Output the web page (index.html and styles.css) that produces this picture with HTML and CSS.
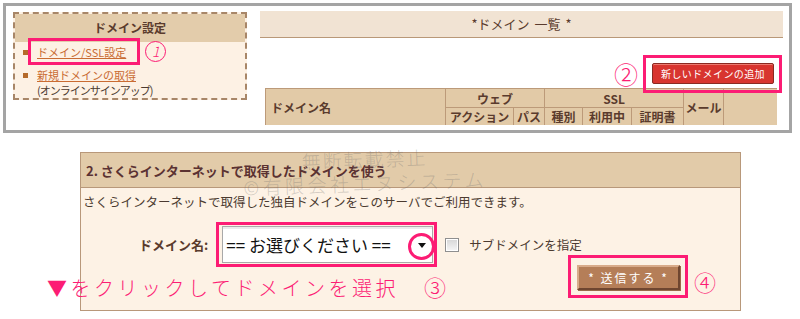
FILE: index.html
```html
<!DOCTYPE html>
<html lang="ja">
<head>
    <meta charset="UTF-8">
    <meta name="viewport" content="width=device-width, initial-scale=1.0">
    <title>ドメイン設定</title>
    <link rel="stylesheet" href="styles.css">
</head>
<body>

<div class="shot">

    <section class="admin">
        <div class="menu">
            <div class="menu-head">ドメイン設定</div>
            <ul class="menu-list">
                <li>
                    <span class="dot"></span>
                    <a class="link mark mark-1" href="#">ドメイン/SSL設定</a>
                    <span class="num-drawn">1</span>
                </li>
                <li>
                    <span class="dot"></span>
                    <div>
                        <a class="link" href="#">新規ドメインの取得</a><br>
                        <span class="sub">(オンラインサインアップ)</span>
                    </div>
                </li>
            </ul>
        </div>

        <div class="list">
            <div class="list-title">*ドメイン 一覧 *</div>
            <div class="add-row">
                <span class="num">②</span>
                <button class="btn-add mark mark-2" type="button">新しいドメインの追加</button>
            </div>
            <div class="table-clip">
                <table class="domains">
                    <colgroup>
                        <col style="width:180px">
                        <col style="width:68px">
                        <col style="width:31px">
                        <col style="width:38px">
                        <col style="width:49px">
                        <col style="width:52px">
                        <col style="width:40px">
                        <col style="width:54px">
                    </colgroup>
                    <tr class="row-1">
                        <th rowspan="2" class="left">ドメイン名</th>
                        <th colspan="2">ウェブ</th>
                        <th colspan="3">SSL</th>
                        <th rowspan="2">メール</th>
                        <th rowspan="2"></th>
                    </tr>
                    <tr class="row-2">
                        <th>アクション</th>
                        <th>パス</th>
                        <th>種別</th>
                        <th>利用中</th>
                        <th>証明書</th>
                    </tr>
                </table>
            </div>
        </div>
    </section>

    <section class="form">
        <h2 class="form-head">2. さくらインターネットで取得したドメインを使う</h2>
        <div class="form-body">
            <p class="lead">さくらインターネットで取得した独自ドメインをこのサーバでご利用できます。</p>
            <div class="field-row">
                <label class="field-label">ドメイン名:</label>
                <div class="select mark mark-3">
                    <span class="select-text">== お選びください ==</span>
                    <span class="select-arrow"></span>
                    <span class="ring"></span>
                </div>
                <span class="check"></span>
                <span class="check-label">サブドメインを指定</span>
            </div>
            <div class="submit-row">
                <button class="btn-send mark mark-4" type="button">* 送信する *</button>
                <span class="num num-4">④</span>
            </div>
        </div>
    </section>

    <!-- annotations drawn over the screenshot -->
    <p class="hint">▼をクリックしてドメインを選択<span class="num num-3">③</span></p>

    <div class="watermark">
        <span class="wm-1">無断転載禁止</span>
        <span class="wm-2">©有限会社エヌシステム</span>
    </div>

</div>

</body>
</html>
```

FILE: styles.css
```css
* {
    box-sizing: border-box;
}

body {
    margin: 0;
    background-color: #fff;
    font-family: "Noto Sans CJK JP", "Liberation Sans", sans-serif;
    color: #4b3a30;
}

.shot {
    position: relative;
    width: 800px;
    height: 319px;
    overflow: hidden;
}

/* pink annotation frames */
.mark {
    position: relative;
}

.mark::after {
    content: "";
    position: absolute;
    border: 3px solid #fc1c74;
    pointer-events: none;
}

.num {
    color: #fc1c74;
    font-size: 24px;
    line-height: 1;
    font-weight: 300;
}

/* top panel */
.admin {
    display: flex;
    align-items: flex-start;
    gap: 13px;
    width: 789px;
    height: 130px;
    margin: 3px 0 0 3px;
    padding: 5px 0 0 7px;
    border: 3px solid #a4a4a4;
}

.menu {
    flex: none;
    width: 234px;
    height: 88px;
    margin-top: 1px;
    border: 2px dashed #a88668;
    background-color: #fdf1e4;
}

.menu-head {
    height: 28px;
    line-height: 28px;
    background-color: #e3ccab;
    text-align: center;
    font-size: 12px;
    font-weight: bold;
    color: #5a3b2d;
}

.menu-list {
    list-style: none;
    margin: 0;
    padding: 3px 0 0 8px;
    font-size: 11px;
    line-height: 15px;
}

.menu-list li {
    display: flex;
    align-items: flex-start;
}

.menu-list li + li {
    margin-top: 6px;
}

.dot {
    flex: none;
    width: 5px;
    height: 5px;
    margin: 5px 9px 0 0;
    background-color: #b56a2a;
}

.link {
    color: #c96b32;
    text-decoration: underline;
}

.sub {
    color: #4b3a30;
    letter-spacing: -1px;
}

.mark-1::after {
    top: -7px;
    left: -9px;
    right: -14px;
    bottom: -5px;
}

.num-drawn {
    flex: none;
    width: 21px;
    height: 21px;
    margin: -4px 0 0 19px;
    border: 1.5px solid #fc1c74;
    border-radius: 50%;
    color: #fc1c74;
    font-size: 14px;
    font-style: italic;
    font-weight: 300;
    line-height: 18px;
    text-align: center;
}

.list {
    flex: none;
    width: 523px;
}

.list-title {
    height: 27px;
    line-height: 26px;
    background-color: #f1e3d3;
    border-bottom: 1px solid #b99878;
    text-align: center;
    font-size: 13px;
    color: #5a3b2d;
    word-spacing: 2px;
}

.add-row {
    display: flex;
    justify-content: flex-end;
    align-items: center;
    gap: 14px;
    height: 21px;
    margin-top: 25px;
    padding-right: 9px;
}

.btn-add {
    width: 122px;
    height: 21px;
    padding: 0;
    border: 1px solid #8a2a22;
    border-radius: 2px;
    background-color: #d8352f;
    box-shadow: inset 0 1px 0 #ec7b70;
    color: #fff;
    font-family: inherit;
    font-size: 10px;
    letter-spacing: 0.4px;
}

.mark-2::after {
    top: -9px;
    left: -10px;
    right: -9px;
    bottom: -10px;
}

.table-clip {
    height: 37px;
    margin: 4px 6px 0 5px;
    overflow: hidden;
}

.domains {
    width: 512px;
    border-collapse: collapse;
    table-layout: fixed;
}

.domains th {
    padding: 0;
    border: 1px solid #bc9a79;
    background-color: #e2caa7;
    color: #5a3b2d;
    font-size: 12px;
    font-weight: bold;
    text-align: center;
}

.domains .left {
    text-align: left;
    padding-left: 5px;
}

.row-1 th {
    height: 19px;
}

.row-2 th {
    height: 18px;
}

/* bottom panel */
.form {
    width: 661px;
    height: 159px;
    margin: 19px 0 0 80px;
    border: 1px solid #b8987a;
    background-color: #fdf2e5;
}

.form-head {
    margin: 0;
    height: 35px;
    line-height: 35px;
    padding-left: 5px;
    background-color: #e2cba9;
    border-bottom: 1px solid #b8987a;
    font-size: 13px;
    font-weight: bold;
    color: #5b3232;
}

.form-body {
    padding: 5px 0 0 2px;
}

.lead {
    margin: 0;
    font-size: 12.5px;
    line-height: 17px;
}

.field-row {
    display: flex;
    align-items: center;
    margin-top: 16px;
    padding-left: 56px;
}

.field-label {
    margin-right: 14px;
    font-size: 13px;
    font-weight: bold;
    color: #5a3b2d;
}

.select {
    display: flex;
    align-items: center;
    width: 211px;
    height: 37px;
    padding-left: 3px;
    border: 1px solid #a9a9a9;
    background-color: #fff;
    box-shadow: inset 0 2px 0 #ececec;
    color: #111;
    font-size: 17px;
}

.mark-3::after {
    top: -5px;
    left: -7px;
    right: -5px;
    bottom: -5px;
}

.select-arrow {
    position: absolute;
    right: 6px;
    top: 16px;
    border-left: 4.5px solid transparent;
    border-right: 4.5px solid transparent;
    border-top: 5px solid #111;
}

.ring {
    position: absolute;
    left: 185px;
    top: 6px;
    width: 27px;
    height: 27px;
    border: 3px solid #fc1c74;
    border-radius: 50%;
}

.check {
    flex: none;
    width: 14px;
    height: 14px;
    margin-left: 12px;
    border: 1px solid #8f8f8f;
    background: linear-gradient(#d6d6d6, #f6f6f6);
    box-shadow: inset 0 0 0 1px #fff;
}

.check-label {
    margin-left: 10px;
    font-size: 12.5px;
}

.submit-row {
    display: flex;
    align-items: center;
    padding-left: 494px;
}

.btn-send {
    width: 103px;
    height: 25px;
    padding: 0;
    border: 2px solid;
    border-color: #d9ab8a #6f4630 #6f4630 #d9ab8a;
    background-color: #b57e58;
    box-shadow: 1px 1px 0 #9a6a4a;
    color: #fff;
    font-family: inherit;
    font-size: 12px;
    letter-spacing: 2px;
}

.mark-4::after {
    top: -12px;
    left: -11px;
    right: -10px;
    bottom: -10px;
}

.num-4 {
    margin: 7px 0 0 14px;
    font-size: 22px;
}

/* overlay notes */
.hint {
    position: absolute;
    left: 47px;
    top: 275px;
    margin: 0;
    color: #fc1c74;
    font-size: 20px;
    font-weight: 300;
    letter-spacing: 3.5px;
    line-height: 24px;
}

.num-3 {
    margin-left: 25px;
    font-size: 22px;
    letter-spacing: 0;
}

.watermark {
    position: absolute;
    left: 243px;
    top: 147px;
    color: rgba(110, 110, 110, 0.3);
    font-weight: 300;
    transform: rotate(-2deg);
    pointer-events: none;
}

.wm-1,
.wm-2 {
    display: block;
    font-size: 19px;
    line-height: 24px;
}

.wm-1 {
    margin-left: 59px;
    letter-spacing: 2px;
}

.wm-2 {
    letter-spacing: 3.5px;
}
```
